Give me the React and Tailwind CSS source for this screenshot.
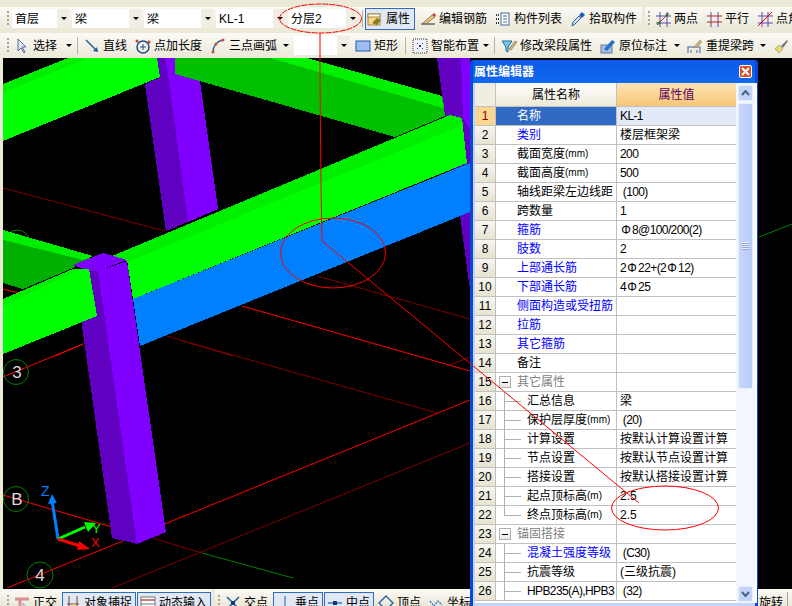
import React from "react";

const font = "font-['Liberation_Sans','Noto_Sans_CJK_SC',sans-serif]";

// half width latin runs, the reference uses a bitmap font
const L = ({ children }) => <span className="tracking-[-0.6px]">{children}</span>;
const Rebar = () => <span className="inline-block w-3 text-center">Φ</span>;

const rows = [
  { n: 1, name: "名称", value: <L>KL-1</L>, link: false, selected: true },
  { n: 2, name: "类别", value: "楼层框架梁", link: true },
  { n: 3, name: <>截面宽度<span className="text-[10px]">(mm)</span></>, value: <L>200</L> },
  { n: 4, name: <>截面高度<span className="text-[10px]">(mm)</span></>, value: <L>500</L> },
  { n: 5, name: "轴线距梁左边线距", value: <L> (100)</L> },
  { n: 6, name: "跨数量", value: <L>1</L> },
  { n: 7, name: "箍筋", value: <><Rebar /><L>8@100/200(2)</L></>, link: true },
  { n: 8, name: "肢数", value: <L>2</L>, link: true },
  { n: 9, name: "上部通长筋", value: <><L>2</L><Rebar /><L>22+(2</L><Rebar /><L>12)</L></>, link: true },
  { n: 10, name: "下部通长筋", value: <><L>4</L><Rebar /><L>25</L></>, link: true },
  { n: 11, name: "侧面构造或受扭筋", value: "", link: true },
  { n: 12, name: "拉筋", value: "", link: true },
  { n: 13, name: "其它箍筋", value: "", link: true },
  { n: 14, name: "备注", value: "" },
  { n: 15, name: "其它属性", value: "", group: true },
  { n: 16, name: "汇总信息", value: "梁", child: true },
  { n: 17, name: <>保护层厚度<span className="text-[10px]">(mm)</span></>, value: <L> (20)</L>, child: true },
  { n: 18, name: "计算设置", value: "按默认计算设置计算", child: true },
  { n: 19, name: "节点设置", value: "按默认节点设置计算", child: true },
  { n: 20, name: "搭接设置", value: "按默认搭接设置计算", child: true },
  { n: 21, name: <>起点顶标高<span className="text-[10px]">(m)</span></>, value: "2.5", child: true },
  { n: 22, name: <>终点顶标高<span className="text-[10px]">(m)</span></>, value: "2.5", child: true, last: true },
  { n: 23, name: "锚固搭接", value: "", group: true },
  { n: 24, name: "混凝土强度等级", value: <L> (C30)</L>, child: true, link: true },
  { n: 25, name: "抗震等级", value: "(三级抗震)", child: true },
  { n: 26, name: <L>HPB235(A),HPB3</L>, value: <L> (32)</L>, child: true },
];

function Arrow() {
  return <span className="block w-0 h-0 border-x-[3px] border-x-transparent border-t-[3px] border-t-black" />;
}

function Combo({ label, w }) {
  return (
    <div className={`flex items-center h-[19px] shrink-0 bg-white ${w}`}>
      <span className="flex-1 pl-[3px] truncate">{label}</span>
      <span className="w-[13px] h-full bg-[#f0eee2] flex items-center justify-center">
        <Arrow />
      </span>
    </div>
  );
}

function Grip() {
  return <div className="w-[2px] h-[16px] mx-[3px] shrink-0 bg-[repeating-linear-gradient(to_bottom,#a8a491_0,#a8a491_2px,transparent_2px,transparent_4px)]" />;
}

function Sep({ className = "" }) {
  return <div className={`w-px h-[17px] bg-[#b5b29e] shrink-0 ${className}`} />;
}

function Tool({ icon, label, w, active, arrow }) {
  return (
    <div
      className={`flex items-center gap-[3px] h-[22px] shrink-0 ${w} ${
        active ? "bg-[#e0e8f4] border border-[#316ac5] pl-px" : "pl-[2px]"
      }`}
    >
      <span className="w-4 h-4 shrink-0">{icon}</span>
      <span className="whitespace-nowrap">{label}</span>
      {arrow && (
        <span className="ml-auto mr-[5px]">
          <Arrow />
        </span>
      )}
    </div>
  );
}

const Svg = ({ children }) => (
  <svg viewBox="0 0 16 16" width="16" height="16" fill="none">
    {children}
  </svg>
);

const icons = {
  prop: <Svg><rect x="1" y="3" width="12" height="11" fill="#f5d98a" stroke="#a88a3a" /><rect x="1" y="3" width="12" height="3" fill="#fff" stroke="#a88a3a" /><path d="M5 12l5-5 4 2-4 5z" fill="#8a7a20" /></Svg>,
  edit: <Svg><path d="M1 13h14" stroke="#222" /><path d="M3 12L12 4l3 2-9 7z" fill="#e8c070" stroke="#555" strokeWidth=".6" /><path d="M12 4l3 2 1-2-2-2z" fill="#c04040" /></Svg>,
  list: <Svg><rect x="6" y="2" width="8" height="12" fill="#fff" stroke="#4a6a9a" /><path d="M8 5h4M8 8h4M8 11h4" stroke="#4a6a9a" /><path d="M1 4h3M1 8h3M1 12h3" stroke="#333" strokeWidth="2" strokeDasharray="1 1" /></Svg>,
  pick: <Svg><path d="M2 15l1-4 6-6 2 2-6 6z" fill="#cfe4f8" stroke="#2a5a9a" /><path d="M9 4l3-3 3 3-3 3z" fill="#1f5fb0" /></Svg>,
  two: <Svg><path d="M5 1v15M12 1v15M1 5h15M1 12h15" stroke="#5a4ab0" /><path d="M2 14L14 2" stroke="#c02020" /><circle cx="4" cy="12" r="1.5" fill="#208020" /><circle cx="12" cy="4" r="1.5" fill="#208020" /></Svg>,
  par: <Svg><path d="M5 1v15M12 1v15" stroke="#5a4ab0" /><path d="M1 5h15M1 11h15" stroke="#c02020" /></Svg>,
  ang: <Svg><path d="M5 1v15M11 1v15M1 5h15M1 12h15" stroke="#5a4ab0" /><path d="M1 15L15 1" stroke="#e00000" /></Svg>,
  sel: <Svg><path d="M4 1v12l3-3 3 5 1-1-3-5h4z" fill="#dfe8f6" stroke="#5a6a9a" /></Svg>,
  line: <Svg><path d="M2 2l11 11" stroke="#1f5fa0" strokeWidth="1.4" /><path d="M14 14l-5-1 4-4z" fill="#1f5fa0" /></Svg>,
  add: <Svg><circle cx="8" cy="9" r="6" stroke="#1f4f8a" strokeWidth="1.5" /><path d="M8 6v6M5 9h6" stroke="#1f4f8a" /><circle cx="2" cy="3" r="1.5" fill="#c04030" /><circle cx="14" cy="4" r="1.5" fill="#c04030" /></Svg>,
  arc: <Svg><path d="M3 14C3 8 7 3 13 2" stroke="#2a5a9a" strokeWidth="1.4" /><circle cx="3" cy="14" r="1.5" fill="#d05030" /><circle cx="6" cy="6" r="1.5" fill="#d05030" /><circle cx="13" cy="2" r="1.5" fill="#d05030" /></Svg>,
  rect: <Svg><rect x="1" y="3" width="14" height="10" fill="#9dbcf0" stroke="#2a5ab0" /></Svg>,
  smart: <Svg><rect x="1" y="1" width="14" height="14" fill="#eef2f8" stroke="#333" strokeDasharray="1 1" /><path d="M5 5h1v1H5zM10 5h1v1h-1zM5 10h1v1H5zM10 10h1v1h-1zM7 7h2v2H7z" fill="#1f3f7a" /></Svg>,
  filter: <Svg><path d="M1 3h10L7 9v5l-2-1V9z" fill="#7ac8e8" stroke="#1f6f9a" /><path d="M8 11l6-8 2 1-6 8z" fill="#e0b060" stroke="#555" strokeWidth=".5" /></Svg>,
  mark: <Svg><rect x="1" y="7" width="11" height="8" fill="#a8c0e0" stroke="#5a7aa0" /><path d="M4 11l8-9 3 2-8 9z" fill="#2a70c8" /></Svg>,
  span: <Svg><path d="M1 15V9h12v6M4 15v-3M10 15v-3" stroke="#6a8ac0" strokeWidth="1.4" /><path d="M7 9l6-7 2 2-6 6z" fill="#e0b060" stroke="#777" strokeWidth=".5" /></Svg>,
  brush: <Svg><path d="M2 11l4-4 4 4-4 4z" fill="#e8d870" stroke="#777" strokeWidth=".5" /><path d="M8 8l6-6 1 1-5 7z" fill="#777" /></Svg>,
  ortho: <Svg><path d="M1 4h14" stroke="#d89090" strokeWidth="3" /><path d="M6 4v11" stroke="#d89090" strokeWidth="3" /><path d="M9 8v7l2-2 3 1z" fill="#dfe8f6" stroke="#778" strokeWidth=".5" /></Svg>,
  snap: <Svg><path d="M4 1v14M12 1v14" stroke="#7a4030" /><path d="M2 9h12" stroke="#7a4030" /><circle cx="9" cy="12" r="3" fill="#e8d080" /></Svg>,
  dyn: <Svg><rect x="1" y="2" width="14" height="12" fill="#fff" stroke="#777" /><path d="M1 5h14" stroke="#c05050" strokeWidth="1.5" /><path d="M1 9h14" stroke="#777" /></Svg>,
  cross: <Svg><path d="M2 2l12 12M14 2L2 14" stroke="#1f5fa0" strokeWidth="1.5" /><rect x="6" y="6" width="4" height="4" fill="#123a7a" /></Svg>,
  perp: <Svg><path d="M9 1v13M1 14h14" stroke="#3a7ac8" strokeWidth="1.2" /></Svg>,
  mid: <Svg><path d="M1 8h14" stroke="#3a7ac8" strokeWidth="1.5" /><rect x="6" y="6" width="4" height="4" fill="#123a7a" /></Svg>,
  top: <Svg><path d="M8 1l7 7-7 7-7-7z" stroke="#1f5fa0" strokeWidth="1.3" /></Svg>,
  coord: <Svg><path d="M2 6l4 5 4-5 4 4" stroke="#2a70c8" strokeDasharray="2 1" strokeWidth="1.3" /></Svg>,
};

function Scene() {
  return (
    <svg className="absolute inset-0" width="789" height="531" viewBox="3 58 789 531" shapeRendering="crispEdges">
      {/* grid */}
      <g fill="none" strokeWidth="1" shapeRendering="auto">
        <path d="M3 188L165 231M180 340L437 413M317 276L470 319M167 336L233 356M153 538L202 553M112 588L470 443M450 365L470 357" stroke="#800000" />
        <path d="M242 306L470 371M3 377L83 344M7 588L470 400M3 495L112 527M3 289L23 294M55 356L83 344" stroke="#ff0000" />
        <path d="M202 553L293 578M759 237L792 224" stroke="#008000" />
        <circle cx="16" cy="372" r="12.5" stroke="#008000" />
        <circle cx="16" cy="499" r="12.5" stroke="#008000" />
        <circle cx="40" cy="575" r="13" stroke="#008000" />
        <circle cx="17" cy="243" r="13" stroke="#008000" />
      </g>
      <g fill="#d8d8d8" fontSize="17" fontFamily="Liberation Sans" textAnchor="middle">
        <text x="17" y="378">3</text>
        <text x="17" y="505">B</text>
        <text x="40" y="581">4</text>
      </g>

      {/* back columns */}
      <polygon points="437,58 461,58 470,130 470,290 460,216 445,116" fill="#6000c0" />
      <polygon points="461,58 470,58 470,130 463,118" fill="#8000ff" />
      <polygon points="145,84 160,77 157,58 165,58 168,75 188,222 166,231" fill="#6000c0" />
      <polygon points="165,58 175,58 175,74 200,81 218,209 188,222 168,75" fill="#8000ff" />

      {/* back beams */}
      <polygon points="175,58 307,58 443,98 445,116 395,137 175,74" fill="#00c000" />
      <polygon points="270,58 307,58 442,96 443,108" fill="#00f000" />
      <polygon points="3,84 68,58 157,58 160,77 3,141" fill="#00ff00" />
      <polygon points="3,84 68,58 88,58 3,93" fill="#00ee00" />
      <polygon points="3,230 93,256 73,268 23,289 3,283" fill="#00b000" />
      <polygon points="3,230 93,256 83,260 3,240" fill="#00ee00" />

      {/* main beam */}
      <polygon points="133,299 470,163 470,212 140,346" fill="#0080ff" />
      <polygon points="112,256 450,115 462,118 467,163 133,299 127,260" fill="#00ff00" />
      <polygon points="112,256 450,115 462,118 463,125 127,262" fill="#00ee00" />

      {/* front column */}
      <polygon points="82,326 89,271 98,271 137,544 112,538" fill="#6000c0" />
      <polygon points="98,271 127,261 166,532 137,544" fill="#8000ff" />
      <polygon points="73,265 103,253 127,260 98,271 89,271" fill="#8000ff" />

      {/* front beam */}
      <polygon points="3,299 73,269 89,269 97,316 3,354" fill="#00ff00" />
      <polygon points="3,299 73,269 80,269 3,306" fill="#00ee00" />

      {/* axis */}
      <g shapeRendering="auto">
        <path d="M58 539L52 500" stroke="#0080ff" strokeWidth="3" />
        <polygon points="52,494 48,504 57,503" fill="#0080ff" />
        <path d="M58 539L85 527" stroke="#00ff00" strokeWidth="3" />
        <polygon points="96,523 84,522 88,532" fill="#00ff00" />
        <path d="M58 539L80 546" stroke="#ff0000" strokeWidth="3" />
        <polygon points="90,549 79,541 77,550" fill="#ff0000" />
        <text x="41" y="496" fontSize="14" fill="#0080ff" fontFamily="Liberation Sans">Z</text>
        <text x="92" y="533" fontSize="13" fill="#00ff00" fontFamily="Liberation Sans">Y</text>
        <text x="91" y="547" fontSize="13" fill="#ff0000" fontFamily="Liberation Sans">X</text>
      </g>
    </svg>
  );
}

function Row({ row }) {
  const nameColor = row.selected
    ? "text-white"
    : row.group
      ? "text-[#808080]"
      : row.link
        ? "text-[#0000ff]"
        : "text-black";
  return (
    <div className="flex h-[19px] border-b border-[#c0c0c0] bg-white">
      <div
        className={`w-[21px] shrink-0 flex items-center justify-center border-r border-[#c0c0c0] ${
          row.selected ? "bg-[#fbd690] text-[#800000]" : "bg-gradient-to-b from-[#f7f6ef] to-[#e6e3d0]"
        }`}
      >
        {row.n}
      </div>
      <div
        className={`relative w-[121px] shrink-0 flex items-center whitespace-nowrap border-r border-[#c0c0c0] ${nameColor} ${
          row.selected ? "bg-[#316ac5]" : ""
        } ${row.child ? "pl-[31px]" : "pl-[21px]"}`}
      >
        {row.group && (
          <span className="absolute left-[3px] top-[3px] w-[12px] h-[12px] border border-[#b0b0b0] bg-gradient-to-b from-white to-[#e8e8e0] flex items-center justify-center">
            <span className="w-[6px] h-px bg-black" />
          </span>
        )}
        {row.child && (
          <>
            <span className={`absolute left-[8px] top-0 w-px bg-[#b0b0b0] ${row.last ? "h-[10px]" : "h-[19px]"}`} />
            <span className="absolute left-[8px] top-[9px] w-[17px] h-px bg-[#b0b0b0]" />
          </>
        )}
        {row.name}
      </div>
      <div className={`flex-1 flex items-center pl-[3px] whitespace-pre ${row.selected ? "bg-[#e1eaf6]" : ""}`}>
        {row.value}
      </div>
    </div>
  );
}

function Panel() {
  return (
    <div className="absolute left-[470px] top-[2px] w-[288px] h-[546px] flex flex-col bg-[#0f55e0] border-x-[3px] border-x-[#0a48d8] rounded-t-[3px]">
      <div className="h-[23px] shrink-0 flex items-center justify-between pl-[1px] pr-[3px] bg-gradient-to-b from-[#0a5ae8] to-[#1268f0]">
        <span className="text-white font-bold">属性编辑器</span>
        <span className="w-[13px] h-[13px] rounded-[2px] bg-[#d8502a] border border-white flex items-center justify-center">
          <svg viewBox="0 0 9 9" width="9" height="9">
            <path d="M1 1l7 7M8 1l-7 7" stroke="#fff" strokeWidth="2" />
          </svg>
        </span>
      </div>
      <div className="flex-1 flex min-h-0 bg-[#c3d4fa] pl-[2px] pb-[3px]">
        <div className="w-[261px] shrink-0 bg-white overflow-hidden">
          <div className="flex h-[24px] border-b border-[#c0c0c0]">
            <div className="w-[21px] shrink-0 bg-[#f0eee2] border-r border-[#c0c0c0]" />
            <div className="w-[121px] shrink-0 flex items-center justify-center bg-gradient-to-b from-white to-[#ece9d8] border-r border-[#c0c0c0]">
              属性名称
            </div>
            <div className="flex-1 flex items-center justify-center text-[#600060] bg-gradient-to-b from-[#fde4b4] to-[#f6c676]">
              属性值
            </div>
          </div>
          {rows.map((row) => (
            <Row key={row.n} row={row} />
          ))}
        </div>
        <div className="w-[21px] shrink-0 flex flex-col gap-[2px] pl-[2px] pr-[2px] pt-[2px] bg-[#f4f6fd] border-r-2 border-white">
          <div className="h-[16px] shrink-0 rounded-[2px] bg-[#c3d4fa] border border-[#e8eefc] flex items-center justify-center">
            <svg viewBox="0 0 9 6" width="9" height="6"><path d="M1 5l3.5-4L8 5" fill="none" stroke="#4d6185" strokeWidth="2" /></svg>
          </div>
          <div className="h-[286px] shrink-0 rounded-[2px] bg-gradient-to-r from-[#c8d6fb] to-[#b8ccf8] border border-[#e8eefc] flex items-center justify-center">
            <div className="w-[7px] h-[8px] bg-[repeating-linear-gradient(to_bottom,#eef2fd_0,#eef2fd_1px,#8aa4dc_1px,#8aa4dc_2px)]" />
          </div>
          <div className="flex-1" />
          <div className="h-[16px] shrink-0 mb-[1px] rounded-[2px] bg-[#c3d4fa] border border-[#e8eefc] flex items-center justify-center">
            <svg viewBox="0 0 9 6" width="9" height="6"><path d="M1 1l3.5 4L8 1" fill="none" stroke="#4d6185" strokeWidth="2" /></svg>
          </div>
        </div>
      </div>
    </div>
  );
}

export default function App() {
  return (
    <div className={`relative w-[792px] h-[606px] overflow-hidden flex flex-col bg-[#ece9d8] text-black text-[12px] leading-none ${font}`}>
      {/* top toolbar */}
      <div className="h-[33px] shrink-0 pt-[7px]">
        <div className="flex items-center h-[23px] bg-gradient-to-b from-[#fbfaf5] to-[#ebe8d8] pl-[4px] overflow-hidden">
          <Grip />
          <div className="flex items-center gap-[2px]">
            <Combo label="首层" w="w-[58px]" />
            <Combo label="梁" w="w-[70px]" />
            <Combo label="梁" w="w-[70px]" />
            <Combo label="KL-1" w="w-[70px]" />
            <Combo label="分层2" w="w-[71px]" />
          </div>
          <Sep className="ml-[3px] mr-[2px]" />
          <Tool icon={icons.prop} label="属性" w="w-[50px]" active />
          <Tool icon={icons.edit} label="编辑钢筋" w="w-[75px] ml-[3px]" />
          <Tool icon={icons.list} label="构件列表" w="w-[75px]" />
          <Tool icon={icons.pick} label="拾取构件" w="w-[74px]" />
          <div className="w-[3px] h-[23px] bg-[#ece9d8] shrink-0" />
          <Grip />
          <Tool icon={icons.two} label="两点" w="w-[51px]" />
          <Tool icon={icons.par} label="平行" w="w-[51px]" />
          <Tool icon={icons.ang} label="点角" w="w-[50px]" />
        </div>
      </div>
      {/* second toolbar */}
      <div className="h-[25px] shrink-0 flex items-center bg-gradient-to-b from-[#fbfaf5] to-[#ebe8d8] pl-[4px] overflow-hidden">
        <Grip />
        <Tool icon={icons.sel} label="选择" w="w-[65px]" arrow />
        <Sep />
        <Tool icon={icons.line} label="直线" w="w-[51px] ml-[4px]" />
        <Tool icon={icons.add} label="点加长度" w="w-[75px]" />
        <Tool icon={icons.arc} label="三点画弧" w="w-[86px]" arrow />
        <Combo label="" w="w-[56px]" />
        <Tool icon={icons.rect} label="矩形" w="w-[52px] ml-[3px]" />
        <Sep />
        <Tool icon={icons.smart} label="智能布置" w="w-[84px] ml-[4px]" arrow />
        <Sep />
        <Tool icon={icons.filter} label="修改梁段属性" w="w-[99px] ml-[4px]" />
        <Tool icon={icons.mark} label="原位标注" w="w-[87px]" arrow />
        <Tool icon={icons.span} label="重提梁跨" w="w-[86px]" arrow />
        <Tool icon={icons.brush} label="" w="w-[22px]" />
      </div>
      {/* drawing area */}
      <div className="relative h-[531px] shrink-0 bg-black ml-[3px]">
        <Scene />
      </div>
      {/* bottom toolbar, cut off by the window edge */}
      <div className="relative flex-1 flex items-start pl-[4px] bg-gradient-to-b from-[#fbfaf5] to-[#ebe8d8] pt-[3px] overflow-hidden">
        <div className="mt-[3px]"><Grip /></div>
        <Tool icon={icons.ortho} label="正交" w="w-[50px]" />
        <Tool icon={icons.snap} label="对象捕捉" w="w-[74px] bg-[#e0e8f4] border border-[#316ac5]" />
        <Tool icon={icons.dyn} label="动态输入" w="w-[74px] ml-px bg-[#e0e8f4] border border-[#316ac5]" />
        <div className="w-[4px] shrink-0 -mt-[3px] h-[20px] bg-[#ece9d8]" />
        <div className="mt-[3px]"><Grip /></div>
        <Tool icon={icons.cross} label="交点" w="w-[50px]" />
        <Tool icon={icons.perp} label="垂点" w="w-[50px] bg-[#e0e8f4] border border-[#316ac5]" />
        <Tool icon={icons.mid} label="中点" w="w-[50px] ml-px bg-[#e0e8f4] border border-[#316ac5]" />
        <Tool icon={icons.top} label="顶点" w="w-[50px] ml-[2px]" />
        <Tool icon={icons.coord} label="坐标" w="w-[48px]" />
        <span className="absolute left-[759px] top-[8px] whitespace-nowrap">旋转</span>
        <span className="absolute left-[787px] top-[3px] w-px h-[14px] bg-[#a8a491]" />
      </div>
      {/* floating window sits over the drawing */}
      <div className="absolute left-0 top-[58px]">
        <Panel />
      </div>
      {/* red mark-up drawn on the screenshot */}
      <svg className="absolute inset-0 pointer-events-none" width="792" height="606" viewBox="0 0 792 606" fill="none" stroke="#ff0000">
        <ellipse cx="320.5" cy="18.5" rx="41" ry="14.5" strokeDasharray="6 1" />
        <ellipse cx="333" cy="253" rx="52.5" ry="35" />
        <ellipse cx="665" cy="508" rx="53.5" ry="22" />
        <path d="M320 33V78L321 186L322 241L639 503" />
      </svg>
    </div>
  );
}
